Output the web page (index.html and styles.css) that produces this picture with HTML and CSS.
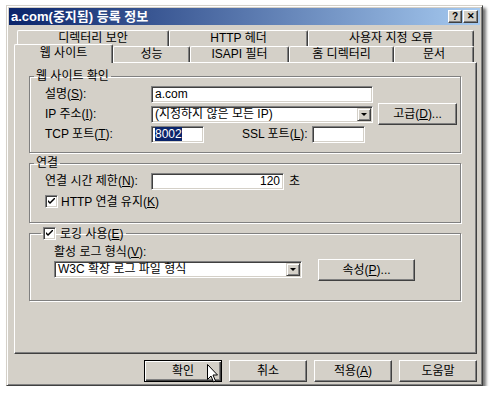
FILE: index.html
```html
<!DOCTYPE html>
<html lang="ko">
<head>
    <meta charset="UTF-8">
    <title>a.com(중지됨) 등록 정보</title>
    <link rel="stylesheet" href="styles.css">
</head>
<body>
    <div class="window">
        <div class="titlebar">
            <span class="title">a.com(중지됨) 등록 정보</span>
            <div class="title-btns">
                <span class="tbtn">?</span>
                <span class="tbtn close">&#x2715;</span>
            </div>
        </div>

        <div class="client">
            <!-- 탭 -->
            <div class="tabrow back">
                <div class="tab w152">디렉터리 보안</div>
                <div class="tab w139">HTTP 헤더</div>
                <div class="tab w166">사용자 지정 오류</div>
            </div>
            <div class="tabrow front">
                <div class="tab selected w99">웹 사이트</div>
                <div class="tab w77">성능</div>
                <div class="tab w99">ISAPI 필터</div>
                <div class="tab w105">홈 디렉터리</div>
                <div class="tab w80">문서</div>
            </div>

            <div class="panel">
                <fieldset class="group g1">
                    <legend>웹 사이트 확인</legend>
                    <div class="row r1">
                        <span class="label">설명(<u>S</u>):</span>
                        <div class="field w222">a.com</div>
                    </div>
                    <div class="row r2">
                        <span class="label">IP 주소(<u>I</u>):</span>
                        <div class="field combo w222">
                            <span class="combo-text">(지정하지 않은 모든 IP)</span>
                            <span class="drop"><span class="arrow"></span></span>
                        </div>
                        <div class="button advanced">고급(<u>D</u>)...</div>
                    </div>
                    <div class="row r3">
                        <span class="label">TCP 포트(<u>T</u>):</span>
                        <div class="field w53"><span class="sel">8002</span></div>
                        <span class="label ssl">SSL 포트(<u>L</u>):</span>
                        <div class="field w53"></div>
                    </div>
                </fieldset>

                <fieldset class="group g2">
                    <legend>연결</legend>
                    <div class="row r4">
                        <span class="label">연결 시간 제한(<u>N</u>):</span>
                        <div class="field w133 num">120</div>
                        <span class="unit">초</span>
                    </div>
                    <div class="row r5">
                        <span class="check"><svg width="7" height="7" viewBox="0 0 7 7"><path d="M0 2 L0 4 L2 6 L7 1 L7 -1 L2 4 Z" fill="#000"/></svg></span>
                        <span class="check-label">HTTP 연결 유지(<u>K</u>)</span>
                    </div>
                </fieldset>

                <fieldset class="group g3">
                    <legend>
                        <span class="check"><svg width="7" height="7" viewBox="0 0 7 7"><path d="M0 2 L0 4 L2 6 L7 1 L7 -1 L2 4 Z" fill="#000"/></svg></span>
                        <span class="check-label">로깅 사용(<u>E</u>)</span>
                    </legend>
                    <div class="log-label">활성 로그 형식(<u>V</u>):</div>
                    <div class="row r6">
                        <div class="field combo w248">
                            <span class="combo-text">W3C 확장 로그 파일 형식</span>
                            <span class="drop"><span class="arrow"></span></span>
                        </div>
                        <div class="button props">속성(<u>P</u>)...</div>
                    </div>
                </fieldset>
            </div>

            <div class="buttons">
                <div class="button default">확인</div>
                <div class="button">취소</div>
                <div class="button">적용(<u>A</u>)</div>
                <div class="button">도움말</div>
            </div>
        </div>
    </div>

    <!-- 마우스 커서 -->
    <svg class="cursor" width="13" height="21" viewBox="0 0 13 21">
        <path d="M1.5 1.5 L1.5 16.5 L5 13 L7.5 19 L9.5 18 L7 12 L11.5 12 Z" fill="#fff" stroke="#000" stroke-width="1"/>
    </svg>
</body>
</html>
```

FILE: styles.css
```css
* {
    box-sizing: border-box;
}
body {
    margin: 0;
    background: #fff;
    font-family: "Liberation Sans", "Noto Sans CJK KR", sans-serif;
    font-size: 12px;
    line-height: 14px;
    color: #000;
}
u {
    text-decoration: underline;
    text-underline-offset: 1px;
}

/* 창 */
.window {
    margin: 5px 0 0 6px;
    width: 477px;
    height: 381px;
    padding: 2px;
    background: #d4d0c8;
    border: 1px solid;
    border-color: #d4d0c8 #404040 #404040 #d4d0c8;
    box-shadow: inset 1px 1px #fff, inset -1px -1px #808080, 3px 3px 3px rgba(0, 0, 0, 0.55);
}
.titlebar {
    height: 17px;
    display: flex;
    align-items: center;
    justify-content: space-between;
    padding: 0 2px 0 2px;
    background: linear-gradient(to right, #0a246a, #a6caf0);
}
.title {
    color: #fff;
    font-weight: bold;
    font-size: 13px;
}
.title-btns {
    display: flex;
    gap: 1px;
}
.tbtn {
    width: 14px;
    height: 13px;
    background: #d4d0c8;
    border: 1px solid;
    border-color: #fff #404040 #404040 #fff;
    box-shadow: inset -1px -1px #808080;
    font-size: 10px;
    line-height: 11px;
    font-weight: bold;
    text-align: center;
}
.tbtn.close {
    width: 15px;
    font-size: 9px;
}

.client {
    padding: 5px 3px 0 5px;
}

/* 탭 */
.tabrow {
    display: flex;
    height: 16px;
}
.tabrow.back {
    margin-left: 3px;
}
.tabrow.front {
    align-items: flex-end;
}
.tab {
    height: 16px;
    border-top: 1px solid #fff;
    border-left: 1px solid #fff;
    border-right: 1px solid #404040;
    border-radius: 2px 2px 0 0;
    box-shadow: inset -1px 0 #808080;
    text-align: center;
    line-height: 14px;
}
.tab.selected {
    position: relative;
    z-index: 1;
    height: 19px;
    margin-bottom: -1px;
    background: #d4d0c8;
    line-height: 16px;
}
.w152 { width: 152px; }
.w139 { width: 139px; }
.w166 { width: 166px; }
.w99 { width: 99px; }
.w77 { width: 77px; }
.w105 { width: 105px; }
.w80 { width: 80px; }

.panel {
    height: 292px;
    padding: 6px 15px 0 14px;
    border: 1px solid;
    border-color: #fff #404040 #404040 #fff;
    box-shadow: inset -1px -1px #808080;
}

/* 그룹 상자 */
.group {
    margin: 0;
    padding: 0 0 0 15px;
    border: 1px solid #808080;
    box-shadow: inset 1px 1px #fff, 1px 1px #fff;
}
.group legend {
    margin-left: -11px;
    padding: 0 2px;
    line-height: 14px;
}
.g1 {
    padding-top: 2px;
    padding-bottom: 9px;
}
.g2 {
    margin-top: 3px;
    padding-top: 2px;
    padding-bottom: 14px;
}
.g3 {
    margin-top: 4px;
    padding-left: 24px;
    padding-bottom: 20px;
}
.g3 legend {
    margin-left: -13px;
    height: 13px;
    display: flex;
    align-items: center;
    gap: 4px;
}

.row {
    display: flex;
    align-items: center;
}
.r1 { height: 18px; }
.r2 { height: 22px; }
.r3 { height: 18px; }
.r4 { height: 18px; }
.r5 { height: 13px; margin-top: 5px; }
.r6 { height: 21px; gap: 16px; margin-top: 0; }
.label {
    width: 106px;
}
.label.ssl {
    width: auto;
    margin: 0 4px 0 38px;
}
.field {
    height: 17px;
    padding: 1px 3px;
    background: #fff;
    border: 1px solid;
    border-color: #808080 #fff #fff #808080;
    box-shadow: inset 1px 1px #404040, inset -1px -1px #d4d0c8;
    line-height: 13px;
    white-space: nowrap;
    overflow: hidden;
}
.w222 { width: 222px; }
.w53 { width: 53px; }
.w133 { width: 133px; }
.w248 { width: 248px; }
.field.num {
    text-align: right;
}
.sel {
    background: #0a246a;
    color: #fff;
}
.combo {
    display: flex;
    justify-content: space-between;
    padding: 1px 1px 1px 3px;
}
.drop {
    width: 14px;
    height: 13px;
    display: flex;
    align-items: center;
    justify-content: center;
    background: #d4d0c8;
    border: 1px solid;
    border-color: #d4d0c8 #404040 #404040 #d4d0c8;
    box-shadow: inset 1px 1px #fff, inset -1px -1px #808080;
}
.arrow {
    width: 0;
    height: 0;
    border-left: 3px solid transparent;
    border-right: 3px solid transparent;
    border-top: 3px solid #000;
}
.unit {
    margin-left: 5px;
}

.check {
    width: 13px;
    height: 13px;
    display: inline-flex;
    align-items: center;
    justify-content: center;
    background: #fff;
    border: 1px solid;
    border-color: #808080 #fff #fff #808080;
    box-shadow: inset 1px 1px #404040, inset -1px -1px #d4d0c8;
}
.r5 .check-label {
    margin-left: 3px;
}
.log-label {
    margin-top: 5px;
    height: 14px;
}

/* 버튼 */
.button {
    height: 22px;
    display: flex;
    align-items: center;
    justify-content: center;
    background: #d4d0c8;
    border: 1px solid;
    border-color: #fff #404040 #404040 #fff;
    box-shadow: inset -1px -1px #808080;
}
.button.advanced {
    width: 79px;
    margin-left: 5px;
}
.button.props {
    width: 97px;
}
.buttons {
    display: flex;
    justify-content: flex-end;
    gap: 7px;
    margin-top: 6px;
}
.buttons .button {
    width: 78px;
}
.button.default {
    border: 1px solid #000;
    box-shadow: inset 1px 1px #fff, inset -1px -1px #404040, inset -2px -2px #808080;
}

.cursor {
    position: absolute;
    left: 206px;
    top: 363px;
}
```
